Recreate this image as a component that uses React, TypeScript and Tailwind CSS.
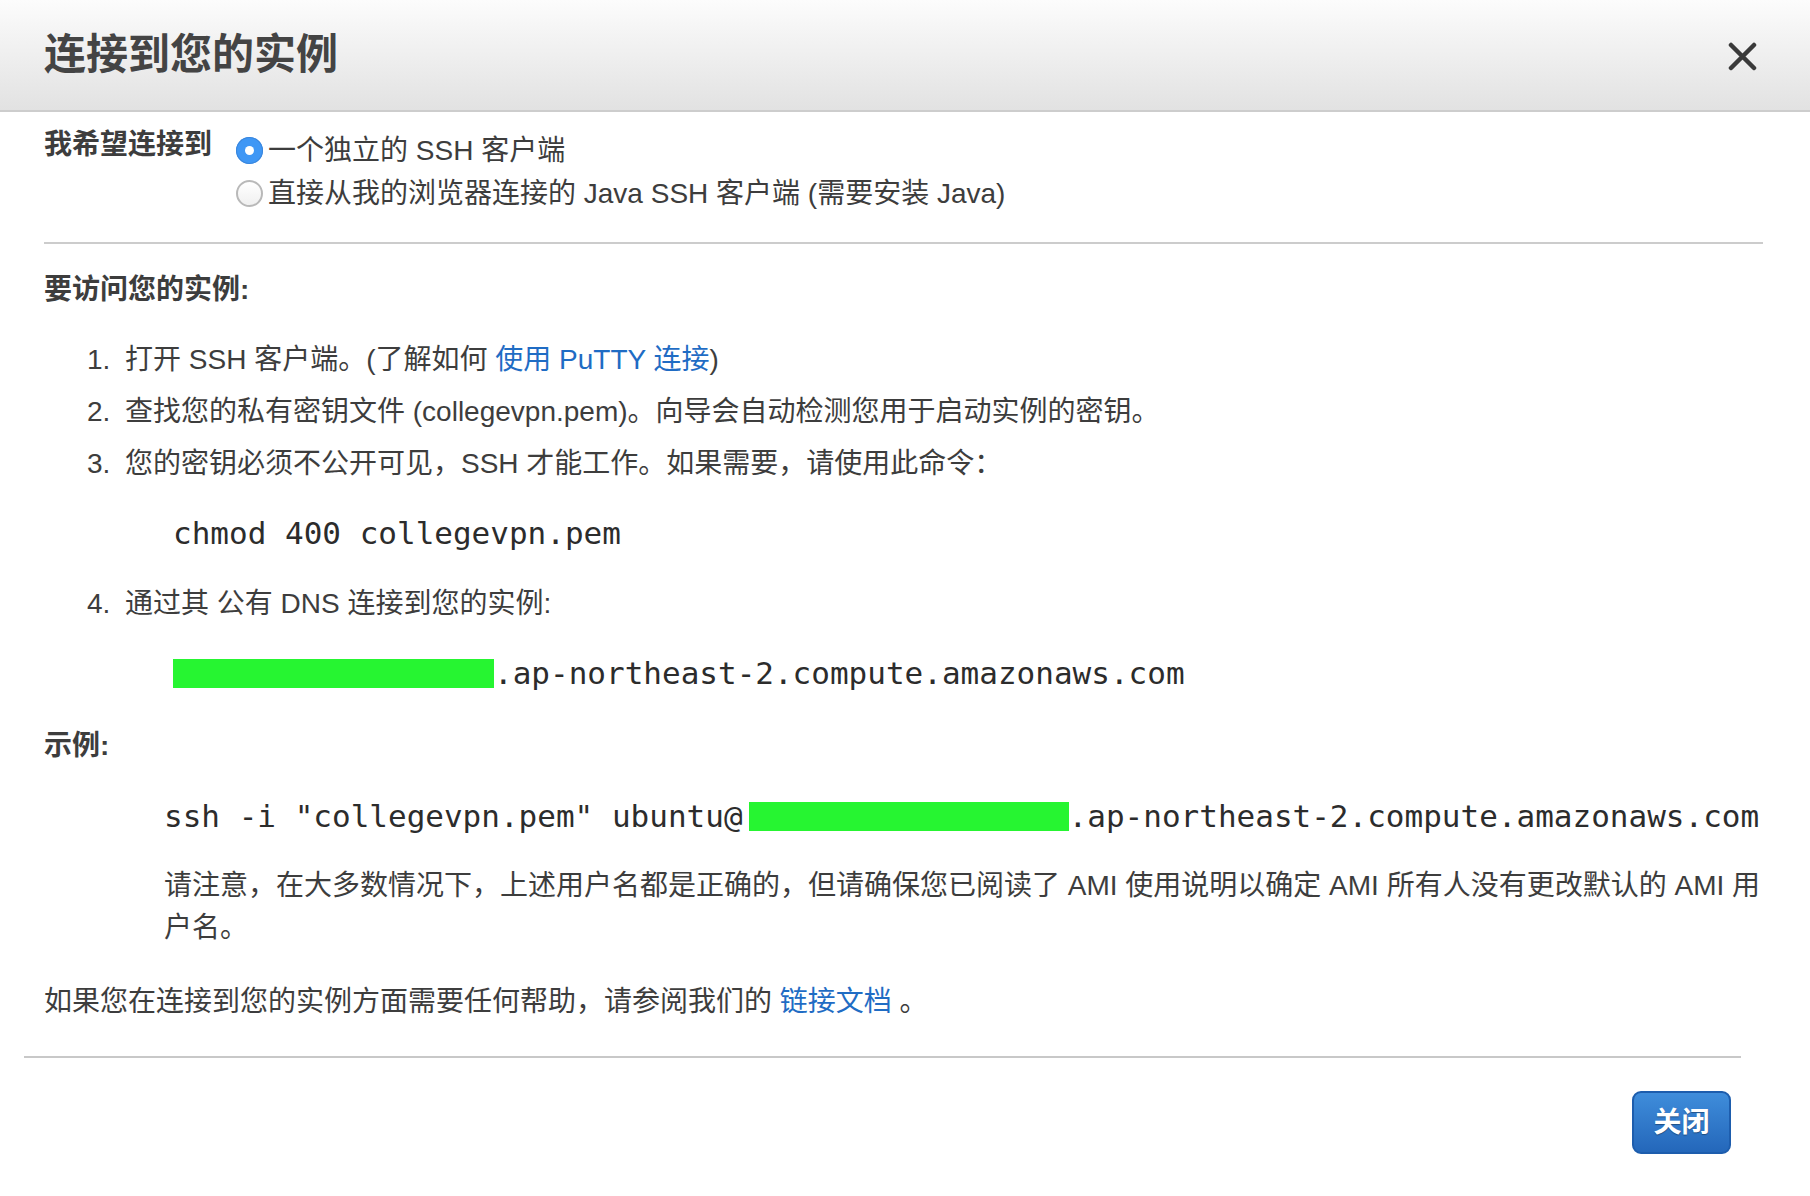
import React from 'react';

const Radio: React.FC<{ checked?: boolean }> = ({ checked }) =>
  checked ? (
    <span className="flex h-[27px] w-[27px] shrink-0 items-center justify-center rounded-full bg-[#3f97f5] shadow-[inset_0_0_0_1px_#3a86dc]">
      <span className="h-[9px] w-[9px] rounded-full bg-white" />
    </span>
  ) : (
    <span className="h-[27px] w-[27px] shrink-0 rounded-full border-2 border-[#b9b9b9] bg-gradient-to-b from-white to-[#f0f0f0]" />
  );

export default function App() {
  const link = 'text-[#1f6cc4]';
  const mono = "font-['DejaVu_Sans_Mono',monospace] text-[31px] leading-[50px] text-[#2c2c2c]";
  return (
    <div className="h-[1196px] w-[1810px] bg-white font-['Liberation_Sans','Noto_Sans_CJK_SC',sans-serif] text-[#3d3d3d]">
      {/* Header */}
      <header className="flex h-[112px] items-center justify-between border-b-2 border-[#cdcdcd] bg-gradient-to-b from-[#fcfcfc] to-[#e2e2e2] pl-[44px] pr-[53px]">
        <h1 className="text-[42px] font-bold leading-none text-[#444]">连接到您的实例</h1>
        <svg width="29" height="29" viewBox="0 0 29 29" className="mt-[3px]">
          <path d="M3 3 L26 26 M26 3 L3 26" stroke="#3a3a3a" strokeWidth="4.5" strokeLinecap="round" />
        </svg>
      </header>

      {/* Connect method */}
      <div className="pl-[44px] pr-[47px]">
        <div className="flex pt-[17px]">
          <div className="w-[192px] text-[28px] font-bold leading-[32px]">我希望连接到</div>
          <div className="flex flex-col">
            <label className="flex h-[43px] items-center gap-[5px] text-[28px]">
              <Radio checked />
              <span>一个独立的 SSH 客户端</span>
            </label>
            <label className="flex h-[43px] items-center gap-[5px] text-[28px]">
              <Radio />
              <span>直接从我的浏览器连接的 Java SSH 客户端 (需要安装 Java)</span>
            </label>
          </div>
        </div>
        <div className="mt-[27px] border-b-2 border-[#cccccc]" />

        <h2 className="mt-[25px] text-[28px] font-bold leading-[42px]">要访问您的实例:</h2>

        <ol className="mt-[23px] text-[28px] leading-[52px]">
          <li className="flex pl-[43px]">
            <span className="w-[38px]">1.</span>
            <span>
              打开 SSH 客户端。(了解如何 <span className={link}>使用 PuTTY 连接</span>)
            </span>
          </li>
          <li className="flex pl-[43px]">
            <span className="w-[38px]">2.</span>
            <span>查找您的私有密钥文件 (collegevpn.pem)。向导会自动检测您用于启动实例的密钥。</span>
          </li>
          <li className="flex pl-[43px]">
            <span className="w-[38px]">3.</span>
            <span>您的密钥必须不公开可见，SSH 才能工作。如果需要，请使用此命令：</span>
          </li>
        </ol>

        <div className={`ml-[129px] mt-[18px] ${mono}`}>chmod 400 collegevpn.pem</div>

        <div className="mt-[20px] flex pl-[43px] text-[28px] leading-[52px]">
          <span className="w-[38px]">4.</span>
          <span>通过其 公有 DNS 连接到您的实例:</span>
        </div>

        <div className={`ml-[129px] mt-[18px] flex items-center ${mono}`}>
          <span className="h-[29px] w-[321px] bg-[#26f531]" />
          <span>.ap-northeast-2.compute.amazonaws.com</span>
        </div>

        <h2 className="mt-[27px] text-[28px] font-bold leading-[42px]">示例:</h2>

        <div className={`ml-[120px] mt-[24px] flex items-center whitespace-pre ${mono}`}>
          <span>ssh -i "collegevpn.pem" ubuntu@</span>
          <span className="ml-[6px] h-[29px] w-[320px] bg-[#26f531]" />
          <span>.ap-northeast-2.compute.amazonaws.com</span>
        </div>

        <p className="ml-[120px] mt-[24px] text-[28px] leading-[42px]">
          请注意，在大多数情况下，上述用户名都是正确的，但请确保您已阅读了 AMI 使用说明以确定 AMI 所有人没有更改默认的 AMI 用
          <br />
          户名。
        </p>

        <p className="mt-[32px] text-[28px] leading-[42px]">
          如果您在连接到您的实例方面需要任何帮助，请参阅我们的 <span className={link}>链接文档</span> 。
        </p>
      </div>

      {/* Footer */}
      <div className="ml-[24px] mr-[69px] mt-[33px] border-b-2 border-[#c8c8c8]" />
      <div className="mr-[79px] mt-[33px] flex justify-end">
        <button className="flex h-[63px] w-[99px] items-center justify-center rounded-[9px] border-2 border-[#1d5dad] bg-gradient-to-b from-[#3f8ddb] to-[#2467ba] text-[28px] font-bold text-white [text-shadow:0_1px_1px_rgba(0,0,0,0.35)]">
          关闭
        </button>
      </div>
    </div>
  );
}
